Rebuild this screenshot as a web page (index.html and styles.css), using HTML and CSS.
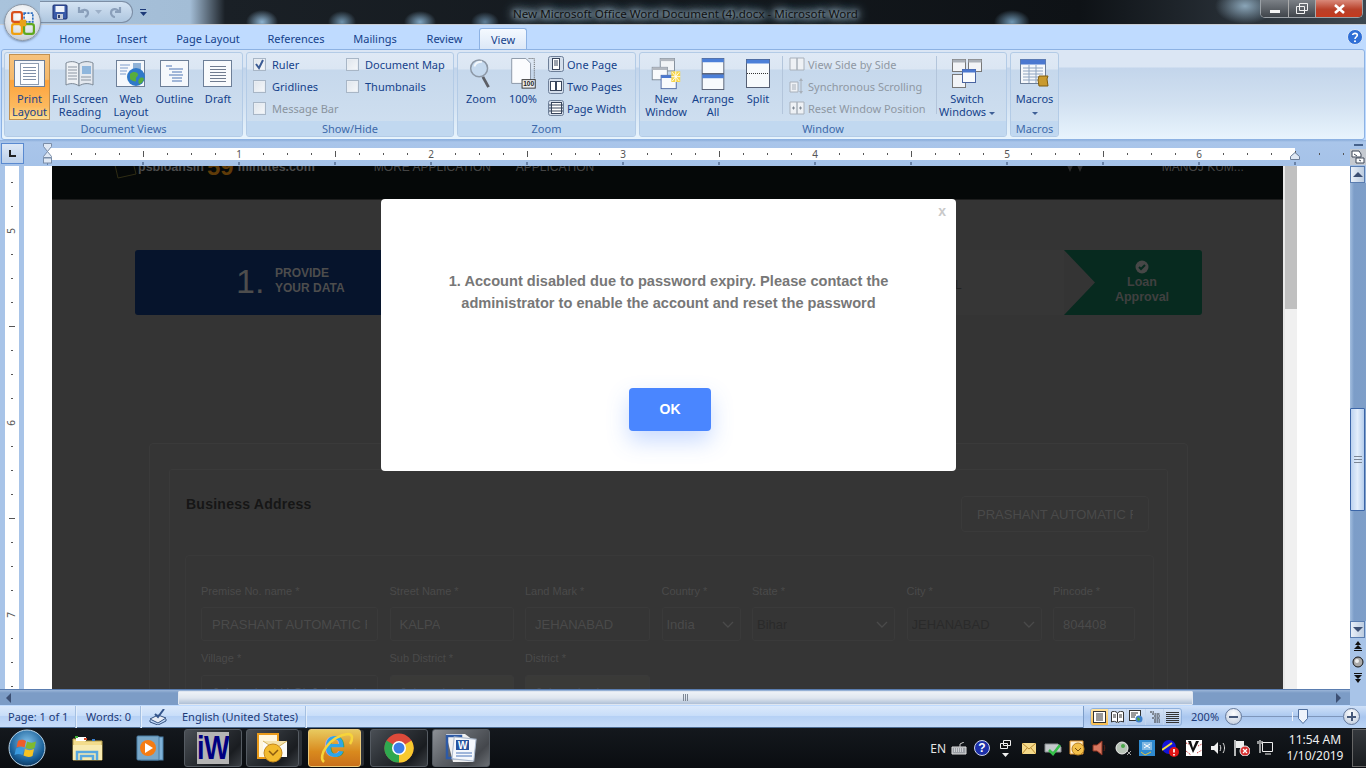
FILE: index.html
```html
<!DOCTYPE html>
<html lang="en">
<head>
<meta charset="utf-8">
<title>New Microsoft Office Word Document (4).docx - Microsoft Word</title>
<link rel="stylesheet" href="styles.css">
</head>
<body>
<div class="app">
  <header class="titlebar">
    <div class="qat">
      <svg class="qi" width="16" height="16" viewBox="0 0 16 16"><rect x="1" y="1" width="14" height="14" rx="1" fill="#3a5aa8" stroke="#1c2f70"/><rect x="3.500" y="2" width="9" height="6" fill="#eef2fa"/><rect x="5" y="10" width="6" height="5" fill="#c5cbd8"/><rect x="6" y="11" width="2" height="3" fill="#33406a"/></svg>
      <svg class="qi q-undo" width="14" height="14" viewBox="0 0 14 14"><path d="M2 2v5h5M3 7c2-3 8-3 8 1 0 2-1 3-3 4" fill="none" stroke="#8a9fba" stroke-width="2.200"/></svg>
      <svg class="qi q-drop" width="7" height="4" viewBox="0 0 7 4"><path d="M0 0h7L3.500 4z" fill="#9db0c8"/></svg>
      <svg class="qi q-redo" width="14" height="14" viewBox="0 0 14 14"><path d="M12 2v5H7M11 7C9 3 3 3 3 8c0 2 2 4 4 4" fill="none" stroke="#8a9fba" stroke-width="2.200"/></svg>
    </div>
    <svg class="q-more" width="7" height="7" viewBox="0 0 7 7"><path d="M0 0h6v1H0zM0 3h7L3.500 7z" fill="#1d3a78"/></svg>
    <div class="win-title">New Microsoft Office Word Document (4).docx - Microsoft Word</div>
    <div class="winbtns">
      <div class="wb wb-min"><span class="min-bar"></span></div>
      <div class="wb wb-max"><svg width="12" height="11" viewBox="0 0 12 11"><path d="M3.500.5h8v7h-8zM.5 3.500h8v7h-8z" fill="none" stroke="#f2f2f2"/></svg></div>
      <div class="wb wb-close"><svg width="11" height="10" viewBox="0 0 11 10"><path d="M1 1l9 8M10 1L1 9" stroke="#fff" stroke-width="2.600"/></svg></div>
    </div>
  </header>

  <div class="office-btn">
    <svg width="24" height="24" viewBox="0 0 22 22"><rect x="1" y="1" width="9" height="9" rx="2" fill="none" stroke="#d8501c" stroke-width="2"/><rect x="12" y="2" width="8" height="8" fill="none" stroke="#2f6fc0" stroke-width="1.500" stroke-dasharray="2 1"/><rect x="1" y="12" width="9" height="9" rx="2" fill="none" stroke="#f0a010" stroke-width="2"/><rect x="12" y="12" width="9" height="9" rx="2" fill="none" stroke="#5fa81e" stroke-width="2"/><rect x="8" y="8" width="6" height="6" fill="#e9a21a"/></svg>
  </div>

  <nav class="tabs">
    <span class="tab">Home</span><span class="tab">Insert</span><span class="tab">Page Layout</span><span class="tab">References</span><span class="tab">Mailings</span><span class="tab">Review</span><span class="tab tab-on">View</span>
    <svg class="help" width="16" height="16" viewBox="0 0 17 17"><circle cx="8.500" cy="8.500" r="8" fill="#2f6fd6" stroke="#dfeaf8"/><path d="M6 6.500C6 4 11 4 11 6.500c0 2-2.500 2-2.500 4" fill="none" stroke="#fff" stroke-width="1.700"/><circle cx="8.500" cy="13" r="1.100" fill="#fff"/></svg>
  </nav>

  <section class="ribbon">
    <div class="group g-views">
      <div class="group-body">
        <div class="big w41 active">
          <svg width="32" height="28" viewBox="0 0 32 28"><rect x=".5" y=".5" width="30" height="26" fill="#f4f7fb" stroke="#6d7f98"/><rect x="6.500" y="3.500" width="18" height="21" fill="#fff" stroke="#8e9cb0"/><path d="M9 7.500h13M9 10.500h13M9 13.500h13M9 16.500h13M9 19.500h13" stroke="#8090a8"/></svg>
          <span class="blabel">Print<br>Layout</span>
        </div>
        <div class="big w60">
          <svg width="30" height="28" viewBox="0 0 30 28"><path d="M1 3c4-2 9-2 13 1v22c-4-3-9-3-13-1z" fill="#eef1f5" stroke="#7b8794"/><path d="M14 4c4-3 10-3 14-1v22c-4-2-10-2-14 1z" fill="#e3e8ef" stroke="#7b8794"/><path d="M3 7h9M3 10h9M3 13h9M3 16h9M3 19h9" stroke="#8b95a2"/><rect x="17" y="6" width="9" height="8" fill="#8fb6dd"/><path d="M16 17h10M16 20h10" stroke="#8b95a2"/></svg>
          <span class="blabel">Full Screen<br>Reading</span>
        </div>
        <div class="big w42">
          <svg width="30" height="28" viewBox="0 0 30 28"><rect x=".5" y=".5" width="28" height="26" fill="#f5f8fc" stroke="#6d7f98"/><path d="M4 5h10M4 8h8M4 11h7M4 14h6" stroke="#7d9ccc"/><rect x="17" y="3" width="8" height="7" fill="#8fb2d8"/><circle cx="20" cy="17" r="9" fill="#2f79c9"/><path d="M14 14c3-3 7-2 8 0s-3 3-2 6-4 1-6-1zM24 18c2-1 4 0 4 1-1 3-3 5-5 5-1-2-1-4 1-6z" fill="#58ad3c"/></svg>
          <span class="blabel">Web<br>Layout</span>
        </div>
        <div class="big w45">
          <svg width="30" height="28" viewBox="0 0 30 28"><rect x=".5" y=".5" width="28" height="26" fill="#f5f8fc" stroke="#6d7f98"/><path d="M6 6h6M9 9h14M12 12h10M9 15h14M12 18h10M12 21h10" stroke="#4d74b4"/></svg>
          <span class="blabel">Outline</span>
        </div>
        <div class="big w42">
          <svg width="30" height="28" viewBox="0 0 30 28"><rect x=".5" y=".5" width="28" height="26" fill="#f8fafc" stroke="#6d7f98"/><path d="M7 6.500h16M7 9.500h16M7 12.500h16M7 15.500h16M7 18.500h16M7 21.500h16" stroke="#707c90"/></svg>
          <span class="blabel">Draft</span>
        </div>
      </div>
      <div class="group-label">Document Views</div>
    </div>

    <div class="group g-show">
      <div class="group-body checks">
        <div class="chk-col c1">
          <div class="chk"><span class="box"><svg width="11" height="11" viewBox="0 0 11 11"><path d="M2 5l3 4 4-8" fill="none" stroke="#3b5b94" stroke-width="2"/></svg></span>Ruler</div>
          <div class="chk"><span class="box"></span>Gridlines</div>
          <div class="chk off"><span class="box"></span>Message Bar</div>
        </div>
        <div class="chk-col">
          <div class="chk"><span class="box"></span>Document Map</div>
          <div class="chk"><span class="box"></span>Thumbnails</div>
        </div>
      </div>
      <div class="group-label">Show/Hide</div>
    </div>

    <div class="group g-zoom">
      <div class="group-body">
        <div class="big w46">
          <svg width="24" height="34" viewBox="0 0 24 34"><circle cx="10" cy="11" r="9" fill="#c5d9ee" stroke="#8d98a6" stroke-width="1.600"/><path d="M5 9c1-4 5-5 8-5" fill="none" stroke="#f2f7fc" stroke-width="2"/><path d="M14 20l6 11" stroke="#5c5f66" stroke-width="3"/></svg>
          <span class="blabel">Zoom</span>
        </div>
        <div class="big w38">
          <svg width="28" height="34" viewBox="0 0 28 34"><path d="M2 .5h15l5 5V27H2z" fill="#fbfcfe" stroke="#8894a4"/><path d="M20 .5h6v24" fill="none" stroke="#555" stroke-dasharray="1 1"/><rect x="13" y="23" width="14" height="9" fill="#eee" stroke="#333"/><text class="hundred" x="20" y="30" text-anchor="middle">100</text></svg>
          <span class="blabel">100%</span>
        </div>
        <div class="small-col">
          <div class="small"><svg width="16" height="16" viewBox="0 0 16 16"><rect x=".5" y=".5" width="15" height="15" rx="2" fill="#d4deeb" stroke="#6d7f98"/><rect x="4.500" y="2.500" width="7" height="11" fill="#fff" stroke="#39465c"/><path d="M6 5h4M6 7h4M6 9h4" stroke="#39465c"/></svg>One Page</div>
          <div class="small"><svg width="16" height="16" viewBox="0 0 16 16"><rect x=".5" y=".5" width="15" height="15" rx="2" fill="#d4deeb" stroke="#6d7f98"/><rect x="2.500" y="3.500" width="5" height="9" fill="#fff" stroke="#39465c"/><rect x="8.500" y="3.500" width="5" height="9" fill="#fff" stroke="#39465c"/></svg>Two Pages</div>
          <div class="small"><svg width="16" height="16" viewBox="0 0 16 16"><rect x=".5" y=".5" width="15" height="15" rx="2" fill="#d4deeb" stroke="#6d7f98"/><rect x="3.500" y="2.500" width="10" height="11" fill="#fff" stroke="#39465c"/><path d="M1 5h14M1 8h14M1 11h14" stroke="#39465c"/></svg>Page Width</div>
        </div>
      </div>
      <div class="group-label">Zoom</div>
    </div>

    <div class="group g-window">
      <div class="group-body">
        <div class="big w52">
          <svg width="32" height="36" viewBox="0 0 32 36"><rect x="9.500" y=".5" width="16" height="14" fill="#f2f4f7" stroke="#7a8694"/><rect x="9.500" y=".5" width="16" height="3" fill="#b3b8c0"/><rect x=".5" y="10.500" width="17" height="14" fill="#f9fafc" stroke="#7a8694"/><rect x=".5" y="10.500" width="17" height="3" fill="#b3b8c0"/><rect x="10.500" y="19.500" width="17" height="15" fill="#f9fafc" stroke="#4a64a0"/><rect x="10.500" y="19.500" width="17" height="3" fill="#4b78d0"/><rect x="22" y="15" width="10" height="12" fill="#f7d548"/><path d="M27 15v12M22 21h10M23 16l8 10M31 16l-8 10" stroke="#fff"/></svg>
          <span class="blabel">New<br>Window</span>
        </div>
        <div class="big w42">
          <svg width="26" height="34" viewBox="0 0 26 34"><rect x="1.500" y=".5" width="23" height="16" fill="#f7fafc" stroke="#555f73"/><rect x="1.500" y=".5" width="23" height="4" fill="#4b7fd8"/><rect x="1.500" y="17.500" width="23" height="16" fill="#f7fafc" stroke="#555f73"/><rect x="1.500" y="17.500" width="23" height="4" fill="#4b7fd8"/></svg>
          <span class="blabel">Arrange<br>All</span>
        </div>
        <div class="big w48">
          <svg width="26" height="30" viewBox="0 0 26 30"><rect x="1.500" y=".5" width="23" height="28" fill="#f7fafc" stroke="#555f73"/><rect x="1.500" y=".5" width="23" height="4" fill="#4b7fd8"/><path d="M2 14.500h22" stroke="#333" stroke-dasharray="1 1"/></svg>
          <span class="blabel">Split</span>
        </div>
        <div class="sep"></div>
        <div class="small-col dis">
          <div class="small"><svg width="16" height="16" viewBox="0 0 16 16"><path d="M1 2h7v12H1zM8 2h7v12H8z" fill="#eef1f5" stroke="#a8b0ba"/></svg>View Side by Side</div>
          <div class="small"><svg width="16" height="16" viewBox="0 0 16 16"><path d="M1 4h8v10H1z" fill="#eef1f5" stroke="#a8b0ba"/><path d="M3 7h4M3 9h4M3 11h4M12 2v12" stroke="#a8b0ba"/><path d="M12 0l2 3h-4zM12 16l2-3h-4z" fill="#a8b0ba"/></svg>Synchronous Scrolling</div>
          <div class="small"><svg width="16" height="16" viewBox="0 0 16 16"><path d="M1 2h7v12H1zM8 2h7v12H8z" fill="#eef1f5" stroke="#a8b0ba"/><path d="M3 8h3M4.500 6.500v3M10 8h3M11.500 6.500v3" stroke="#7f8894"/></svg>Reset Window Position</div>
        </div>
        <div class="sep"></div>
        <div class="big w60">
          <svg width="30" height="30" viewBox="0 0 30 30"><rect x=".5" y=".5" width="13" height="12" fill="#f2f4f7" stroke="#777"/><rect x=".5" y=".5" width="13" height="3" fill="#aab0b8"/><rect x="16.500" y=".5" width="13" height="12" fill="#f2f4f7" stroke="#777"/><rect x="16.500" y=".5" width="13" height="3" fill="#aab0b8"/><rect x=".5" y="15.500" width="13" height="13" fill="#f2f4f7" stroke="#777"/><rect x="10.500" y="10.500" width="13" height="13" fill="#f9fbfd" stroke="#4a64a0"/><rect x="10.500" y="10.500" width="13" height="3" fill="#4b78d0"/></svg>
          <span class="blabel">Switch<br>Windows <i class="drop"></i></span>
        </div>
      </div>
      <div class="group-label">Window</div>
    </div>

    <div class="group g-macros">
      <div class="group-body">
        <div class="big w47">
          <svg width="30" height="30" viewBox="0 0 30 30"><rect x=".5" y=".5" width="25" height="24" fill="#f6f8fb" stroke="#6d7f98"/><rect x=".5" y=".5" width="25" height="5" fill="#4b78d0"/><path d="M3 9h20M3 12h20M3 15h20M3 18h20M3 21h20M9 6v18M16 6v18" stroke="#8ea4c0"/><path d="M19 17h9l-1 3 1 7h-9l-1-6z" fill="#c99a2e" stroke="#7e5c10"/></svg>
          <span class="blabel">Macros<br><i class="drop"></i></span>
        </div>
      </div>
      <div class="group-label">Macros</div>
    </div>
  </section>

  <div class="ruler-row">
    <div class="tabstop"><svg width="9" height="9" viewBox="0 0 9 9"><path d="M1 1h2v5h5v2H1z" fill="#222"/></svg></div>
    <div class="hruler">
      <svg width="1303" height="24" viewBox="0 0 1303 24">
        <defs>
          <pattern id="tk" width="192" height="24" patternUnits="userSpaceOnUse">
            <path d="M24.500 11v2M48.500 11v2M72.500 11v2M120.500 11v2M144.500 11v2M168.500 11v2" stroke="#555"/>
            <path d="M96.500 9v6" stroke="#555"/>
          </pattern>
          <pattern id="tk2" width="96" height="24" patternUnits="userSpaceOnUse">
            <path d="M96 20v3M0 20v3" stroke="#6a83a8" stroke-width="2"/>
          </pattern>
        </defs>
        <rect y="6" width="1248" height="12" fill="#fff"/>
        <rect width="1303" height="24" fill="url(#tk2)"/>
        <rect width="1303" height="24" fill="url(#tk)"/>
        <text class="rnum" x="192" y="16" text-anchor="middle">1</text><text class="rnum" x="384" y="16" text-anchor="middle">2</text><text class="rnum" x="576" y="16" text-anchor="middle">3</text><text class="rnum" x="768" y="16" text-anchor="middle">4</text><text class="rnum" x="960" y="16" text-anchor="middle">5</text><text class="rnum" x="1152" y="16" text-anchor="middle">6</text>
      </svg>
      <svg class="indent-l" width="10" height="21" viewBox="0 0 10 21"><path d="M.5.5h8v3L4.500 8.500.5 3.500zM4.500 8.500l4 5v1h-8v-1z" fill="#dfe8f4" stroke="#7a8da8"/><rect x=".5" y="15" width="8" height="5" fill="#dfe8f4" stroke="#7a8da8"/></svg>
      <svg class="indent-r" width="10" height="8" viewBox="0 0 10 8"><path d="M5 .5l4.500 4v3h-9v-3z" fill="#dfe8f4" stroke="#6a7d98"/></svg>
    </div>
    <div class="view-toggle">
      <span class="dash"></span>
      <svg class="vt-icon" width="16" height="16" viewBox="0 0 16 16"><rect width="16" height="16" fill="#c4c9d0"/><path d="M2 2h7l2 3v3H2zM6 9h8v5H6z" fill="#fff" stroke="#3c4656"/><path d="M4 5l3 2M9 11l2 1" stroke="#3c4656"/></svg>
    </div>
  </div>

  <div class="doc-row">
    <div class="vruler">
      <svg width="14" height="523" viewBox="0 0 14 523">
        <defs>
          <pattern id="vt" width="14" height="192" patternUnits="userSpaceOnUse" patternTransform="translate(0 64)">
            <path d="M6 24.500h2M6 48.500h2M6 72.500h2M6 120.500h2M6 144.500h2M6 168.500h2" stroke="#555"/>
            <path d="M4 96.500h6" stroke="#555"/>
          </pattern>
        </defs>
        <rect width="14" height="523" fill="#fff"/>
        <rect width="14" height="523" fill="url(#vt)"/>
        <text class="rnum" transform="translate(10 65) rotate(-90)" text-anchor="middle">5</text>
        <text class="rnum" transform="translate(10 257) rotate(-90)" text-anchor="middle">6</text>
        <text class="rnum" transform="translate(10 449) rotate(-90)" text-anchor="middle">7</text>
      </svg>
    </div>
    <div class="page-margin"></div>

    <main class="webpage">
      <div class="site-head">
        <div class="site-row">
          <svg class="logo" width="24" height="18" viewBox="0 0 24 18"><path d="M2 4l18-3 3 12-18 4z" fill="none" stroke="#2f2c14"/></svg>
          <span class="brand">psbloansin</span><span class="brand-59">59</span><span class="brand">minutes.com</span>
          <span class="menu m1">MORE APPLICATION</span>
          <span class="menu m2">APPLICATION</span>
          <svg class="hands" width="20" height="12" viewBox="0 0 20 12"><path d="M0 0l5 11 5-11 5 11 5-11z" fill="#2b2b2b"/></svg>
          <span class="menu m3">MANOJ KUM...</span>
        </div>
      </div>
      <div class="site-body">
        <div class="stepper">
          <div class="step-one">
            <span class="step-num">1.</span>
            <span class="step-text">PROVIDE<br>YOUR DATA</span>
          </div>
          <div class="step-mid"><span class="step-l">L</span></div>
          <div class="step-end">
            <svg width="14" height="14" viewBox="0 0 14 14"><circle cx="7" cy="7" r="6.500" fill="#474747"/><path d="M4 7l2 2 4-4" fill="none" stroke="#072a1f" stroke-width="2"/></svg>
            <span class="step-end-text">Loan<br>Approval</span>
          </div>
        </div>

        <div class="card-outer">
          <div class="card-mid">
            <div class="biz-head">
              <h2 class="biz-title">Business Address</h2>
              <div class="field-in biz-input"><span class="clip">PRASHANT AUTOMATIC R</span></div>
            </div>
            <div class="card-inner">
              <div class="form-grid">
                <label class="lab">Premise No. name *</label><label class="lab">Street Name *</label><label class="lab">Land Mark *</label><label class="lab">Country *</label><label class="lab">State *</label><label class="lab">City *</label><label class="lab">Pincode *</label>
                <div class="field-in f1"><span class="clip">PRASHANT AUTOMATIC R</span></div>
                <div class="field-in"><span class="clip">KALPA</span></div>
                <div class="field-in"><span class="clip">JEHANABAD</span></div>
                <div class="field-in sel"><span class="clip">India</span><svg width="12" height="7" viewBox="0 0 12 7"><path d="M1 1l5 5 5-5" fill="none" stroke="#4a4a4a" stroke-width="1.400"/></svg></div>
                <div class="field-in sel sel-dark"><span class="clip">Bihar</span><svg width="12" height="7" viewBox="0 0 12 7"><path d="M1 1l5 5 5-5" fill="none" stroke="#4a4a4a" stroke-width="1.400"/></svg></div>
                <div class="field-in sel sel-dark"><span class="clip">JEHANABAD</span><svg width="12" height="7" viewBox="0 0 12 7"><path d="M1 1l5 5 5-5" fill="none" stroke="#4a4a4a" stroke-width="1.400"/></svg></div>
                <div class="field-in"><span class="clip">804408</span></div>
                <label class="lab row2">Village *</label><label class="lab row2">Sub District *</label><label class="lab row2">District *</label><span class="row2 fill4"></span>
                <div class="field-in f1"><span class="clip">Jehanabad H.O) Jehanabad</span></div>
                <div class="field-in ro"><span class="clip">Jehanabad</span></div>
                <div class="field-in ro"><span class="clip">Jehanabad</span></div>
              </div>
            </div>
          </div>
        </div>
      </div>

      <div class="modal">
        <span class="modal-x">x</span>
        <p class="modal-msg">1. Account disabled due to password expiry. Please contact the<br>administrator to enable the account and reset the password</p>
        <button class="modal-ok" type="button">OK</button>
      </div>
    </main>

    <div class="browser-scroll"></div>
    <div class="page-right"></div>

    <div class="vscroll">
      <div class="sb-btn"><i class="tri-up"></i></div>
      <div class="sb-track"><div class="sb-thumb"><span class="grip"></span></div></div>
      <div class="sb-btn"><i class="tri-down"></i></div>
      <div class="sb-nav">
        <svg width="10" height="10" viewBox="0 0 10 10"><path d="M5 0l3 4H2zM5 4l4 4H1zM1 9h8v1H1z" fill="#111"/></svg>
        <svg width="12" height="12" viewBox="0 0 12 12"><circle cx="6" cy="6" r="5" fill="#aaa" stroke="#111"/><circle cx="5" cy="5" r="2" fill="#eee"/></svg>
        <svg width="10" height="10" viewBox="0 0 10 10"><path d="M1 0h8v1H1zM1 2h8L5 6zM2 6h6l-3 4z" fill="#111"/></svg>
      </div>
    </div>
  </div>

  <div class="hscroll-row">
    <div class="hscroll">
      <i class="tri-left"></i>
      <div class="h-thumb"><svg width="6" height="7" viewBox="0 0 6 7"><path d="M.5 0v7M2.500 0v7M4.500 0v7" stroke="#7d8794"/></svg></div>
      <i class="tri-right"></i>
    </div>
    <div class="h-corner"></div>
  </div>

  <footer class="statusbar">
    <span class="st st-page">Page: 1 of 1</span>
    <span class="st st-words">Words: 0</span>
    <span class="st st-proof"><svg width="18" height="16" viewBox="0 0 18 16"><path d="M1 10l8-4 8 3-8 5z" fill="#e8ecf4" stroke="#33507f"/><path d="M1 11v2l8 3 8-4v-2" fill="none" stroke="#33507f"/><path d="M6 5l3 3 6-8" fill="none" stroke="#34558c" stroke-width="2"/></svg></span>
    <span class="st st-lang">English (United States)</span>
    <div class="st-right">
      <div class="viewbtns">
        <span class="vb vb-on"><svg width="13" height="12" viewBox="0 0 13 12"><rect x=".5" y=".5" width="12" height="11" fill="#fff" stroke="#333"/><path d="M3 3h7M3 5h7M3 7h7M3 9h7" stroke="#333"/></svg></span>
        <span class="vb"><svg width="13" height="12" viewBox="0 0 13 12"><path d="M.5 1c2-1 4-1 6 1 2-2 4-2 6-1v10c-2-1-4-1-6 1-2-2-4-2-6-1z" fill="#fff" stroke="#333"/><path d="M6.500 2v9M2 4h3M2 6h3M8 4h3M8 6h3" stroke="#333"/></svg></span>
        <span class="vb"><svg width="14" height="13" viewBox="0 0 14 13"><rect x=".5" y=".5" width="11" height="10" fill="#fff" stroke="#333"/><path d="M2 3h7M2 5h5M2 7h4" stroke="#333"/><circle cx="10" cy="9" r="3.500" fill="#3d7fc9"/><path d="M8 8c1-1 3 0 3 2l-2 1z" fill="#4fa63a"/></svg></span>
        <span class="vb"><svg width="13" height="12" viewBox="0 0 13 12"><path d="M2 1h4M4 3h8M6 5h6M4 7h8M6 9h6M6 11h6" stroke="#333" stroke-dasharray="2 .5"/></svg></span>
        <span class="vb"><svg width="13" height="12" viewBox="0 0 13 12"><path d="M0 1.500h13M0 3.500h13M0 5.500h13M0 7.500h13M0 9.500h13M0 11.500h13" stroke="#333"/></svg></span>
      </div>
      <span class="zoom-pct">200%</span>
      <span class="zbtn"><i class="z-minus"></i></span>
      <div class="zslider">
        <span class="z-mid"></span>
        <svg class="z-thumb" width="10" height="15" viewBox="0 0 10 15"><path d="M.5.5h9v9L5 14.500.5 9.500z" fill="#eef3fb" stroke="#4f6f9f"/></svg>
      </div>
      <span class="zbtn"><i class="z-minus"></i><i class="z-plus"></i></span>
    </div>
  </footer>

  <div class="taskbar">
    <div class="start">
      <svg width="38" height="38" viewBox="0 0 38 38"><defs><radialGradient id="orb" cx=".5" cy=".35" r=".7"><stop offset="0" stop-color="#7fc0ea"/><stop offset=".7" stop-color="#175d96"/><stop offset="1" stop-color="#0c2f52"/></radialGradient></defs><circle cx="19" cy="19" r="18" fill="url(#orb)" stroke="#b8d4e8"/><path d="M10 12c3-2 6-1 8 0l-1.500 6.500c-2-1-5-1.500-8 0z" fill="#ef5d2a"/><path d="M19 12.500c3 1.500 6 1.500 9 0L26.500 19c-3 1.500-6 1-9 0z" fill="#7fba2f"/><path d="M8 19.500c3-1.500 6-1 8 0L14.500 26c-2-1-5-1.500-8 0z" fill="#3a9be0"/><path d="M17 20c3 1.500 6 1.500 9 0L24.500 27c-3 1.500-6 1-9-.5z" fill="#f7c322"/></svg>
    </div>
    <div class="pin p-folder">
      <svg width="32" height="28" viewBox="0 0 32 28"><path d="M1 5h10l2 2h17v19H1z" fill="#f3dc8c" stroke="#b9a14e"/><rect x="4" y="3" width="10" height="4" fill="#fff"/><rect x="3" y="2" width="3" height="2" fill="#3ab03a"/><rect x="12" y="4" width="3" height="2" fill="#d84a2a"/><rect x="20" y="5" width="3" height="2" fill="#3a80d0"/><path d="M1 11h29v15H1z" fill="#f8eab0"/><path d="M5 26v-8h20v8M9 26v-4h12v4" fill="none" stroke="#58a8e0" stroke-width="2.500"/></svg>
    </div>
    <div class="pin p-media">
      <svg width="28" height="28" viewBox="0 0 28 28"><rect x="5" y="3" width="22" height="23" fill="#7fb2d8" stroke="#4b7ea6"/><rect x="1" y="2" width="22" height="24" rx="1" fill="#7aa8c9" stroke="#4b7ea6"/><circle cx="12" cy="14" r="8" fill="#f57c14"/><path d="M9 9l8 5-8 5z" fill="#fff"/></svg>
    </div>
    <div class="tb-btn t-iw"><span class="iw-tile"><b class="iw-text">iW</b></span></div>
    <div class="tb-btn t-outlook stack">
      <svg width="32" height="32" viewBox="0 0 32 32"><path d="M1 2h20v24H1z" fill="#fff6dc" stroke="#e99a1a" stroke-width="2"/><rect x="6" y="9" width="24" height="16" fill="#fbfbf8"/><path d="M6 9l12 8 12-8" fill="#f4e3ae" stroke="#d4b25a"/><circle cx="16" cy="21" r="9" fill="#f3bb2e" stroke="#c5881a"/><path d="M12 19l4 4 5-5" fill="none" stroke="#8a5a10" stroke-width="1.500"/></svg>
    </div>
    <div class="tb-btn t-ie stack">
      <span class="ie-e">e</span>
      <svg class="ie-ring" width="36" height="34" viewBox="0 0 36 34"><path d="M6 30C-1 24 12 4 30 2c5 0 5 5 2 10" fill="none" stroke="#f7d43a" stroke-width="2.500"/></svg>
    </div>
    <div class="tb-btn t-chrome">
      <svg width="30" height="30" viewBox="0 0 30 30"><circle cx="15" cy="15" r="14.500" fill="#dd4a3a"/><path d="M15 15L2.500 7.500A14.500 14.500 0 0 0 15 29.500z" fill="#2fa84f"/><path d="M15 15l12.500-7.500A14.500 14.500 0 0 1 15 29.500z" fill="#f8c92e"/><circle cx="15" cy="15" r="7" fill="#fff"/><circle cx="15" cy="15" r="5.500" fill="#3d7ee6"/></svg>
    </div>
    <div class="tb-btn t-word">
      <svg width="32" height="32" viewBox="0 0 32 32"><path d="M1 2h19l8 6v22H8z" fill="#fff" opacity=".9"/><path d="M2 4h14v22H2z" fill="none" stroke="#2d5aa6" stroke-width="2.500"/><rect x="8" y="6" width="22" height="22" fill="#f4f7fc" stroke="#aab8cc" transform="rotate(6 19 17)"/><rect x="11" y="8" width="13" height="10" fill="#25529e"/><text class="w-letter" x="13" y="17">W</text><path d="M11 21h16M11 24h16" stroke="#4a74b8"/></svg>
    </div>
    <div class="tb-space"></div>
    <span class="tray-en">EN</span>
    <div class="tray">
      <svg width="16" height="13" viewBox="0 0 16 13"><path d="M1 5h14v7H1z" fill="#9a9ea4" stroke="#e0e0e0"/><path d="M3 7h10M3 9h10" stroke="#fff" stroke-dasharray="1 1"/><path d="M9 5V2l4-2" fill="none" stroke="#ccc"/></svg>
      <svg width="16" height="16" viewBox="0 0 16 16"><circle cx="8" cy="8" r="7.500" fill="#1c2fa8" stroke="#cfd4e8"/><text class="q-mark" x="8" y="12" text-anchor="middle">?</text></svg>
      <svg width="11" height="17" viewBox="0 0 11 17"><path d="M3.500.5h7v5h-7zM.5 3.500h7v5h-7z" fill="#111" stroke="#eee"/><path d="M2 13h7l-3.500 4z" fill="#eee"/></svg>
      <svg width="14" height="11" viewBox="0 0 14 11"><rect width="14" height="11" fill="#f4d98a"/><path d="M0 0l7 6 7-6M0 11l5-6M14 11L9 5" fill="none" stroke="#b98a30"/></svg>
      <svg width="18" height="15" viewBox="0 0 18 15"><path d="M1 3h13l3 3v5H1z" fill="#c4c8cc" stroke="#8a8e92"/><path d="M5 9l4 4 7-9" fill="none" stroke="#35c04a" stroke-width="2.500"/></svg>
      <svg width="16" height="16" viewBox="0 0 16 16"><path d="M1 1h13v13H1z" fill="#fff0d0" stroke="#e0912a"/><circle cx="9" cy="9" r="6" fill="#f3c04a" stroke="#b88020"/><path d="M6 8l3 3 3-3" fill="none" stroke="#7a5010"/></svg>
      <svg width="16" height="16" viewBox="0 0 16 16"><path d="M1 5h4l5-4v14l-5-4H1z" fill="#d87860" stroke="#8a3020"/><path d="M12 5c1 2 1 4 0 6" fill="none" stroke="#5a2015"/></svg>
      <svg width="17" height="15" viewBox="0 0 17 15"><circle cx="7" cy="7" r="6" fill="#b8c4b8" stroke="#eee"/><circle cx="8" cy="5" r="2" fill="#4aa84a"/><path d="M12 10l4 4M16 10l-4 4" stroke="#aaa"/></svg>
      <svg width="16" height="16" viewBox="0 0 16 16"><rect width="16" height="16" fill="#2f8ad0"/><rect x="3" y="2" width="10" height="8" fill="#fff" opacity=".4"/><path d="M5 4l6 4M11 4L5 8" stroke="#fff"/><path d="M2 12l4 3 6-3" stroke="#e8c23a" fill="none"/></svg>
      <svg width="17" height="17" viewBox="0 0 17 17"><circle cx="7" cy="7" r="7" fill="#1414d8"/><path d="M0 10l10-7" stroke="#f0e040" stroke-width="2"/><circle cx="12" cy="12" r="5" fill="#e01414"/><path d="M12 9v3.500M12 14v1.500" stroke="#fff" stroke-width="1.700"/></svg>
      <svg width="16" height="16" viewBox="0 0 16 16"><rect width="16" height="16" fill="#fff"/><path d="M2 1l5 12L13 1h-3L7 8 5 1z" fill="#111"/><path d="M0 11l5 4M11 13l5-3M0 3l3 1M12 6l4-2" stroke="#c01c1c" stroke-dasharray="1 1"/></svg>
      <svg width="15" height="14" viewBox="0 0 15 14"><path d="M0 5h3l4-4v12L3 9H0z" fill="#eee"/><path d="M9 4c1 2 1 4 0 6M12 2c2 3 2 7 0 10" fill="none" stroke="#ddd"/></svg>
      <svg width="16" height="16" viewBox="0 0 16 16"><path d="M1 0v16" stroke="#eee" stroke-width="1.500"/><path d="M2 1h8v7H2z" fill="#eee"/><circle cx="11" cy="11" r="5" fill="#d83030" stroke="#eee"/><path d="M9 9l4 4M13 9l-4 4" stroke="#fff" stroke-width="1.300"/></svg>
      <svg width="16" height="16" viewBox="0 0 16 16"><path d="M5.500 2.500h10v9h-10z" fill="none" stroke="#eee"/><path d="M3 0v5M1 1v3M5 1v3M3 5v8M8 14h6" stroke="#eee" stroke-width="1.200"/></svg>
    </div>
    <div class="clock"><span>11:54 AM</span><span>1/10/2019</span></div>
    <div class="show-desk"></div>
  </div>
</div>
</body>
</html>
```

FILE: styles.css
```css
* { box-sizing: border-box; }
html, body { margin: 0; height: 100%; overflow: hidden; }
body { font-family: "Noto Sans", "Open Sans", sans-serif; font-size: 11px; color: #15428b; background: #bfdbff; }
.app { position: relative; width: 1366px; height: 768px; display: flex; flex-direction: column; overflow: hidden; }

/* title bar */
.titlebar {
  height: 25px; flex: none; display: flex; align-items: center; position: relative;
  border-bottom: 1px solid #c8ccd2;
  background:
    radial-gradient(ellipse 16px 12px at 262px 22px, #8db4d2, transparent),
    radial-gradient(ellipse 14px 11px at 342px 22px, #6f93ad, transparent),
    radial-gradient(ellipse 16px 11px at 420px 22px, #7fa5c2, transparent),
    radial-gradient(ellipse 14px 10px at 485px 22px, #5f7f98, transparent),
    radial-gradient(ellipse 18px 12px at 1012px 22px, #6f97b4, transparent),
    radial-gradient(ellipse 30px 18px at 1245px 6px, #8aa5b8, transparent),
    linear-gradient(90deg, #a9c3dc 0, #a3bdd6 190px, #1a2026 225px, #0e1216 1080px, #252c33 1220px, #3c4750 1366px);
}
.qat {
  margin-left: 40px; width: 93px; height: 22px; border: 1px solid #7c8ea5; border-left: 0; border-radius: 0 11px 11px 0;
  background: linear-gradient(#d4e3f3, #aec6df); display: flex; align-items: center; padding-left: 12px;
}
.qi { flex: none; display: block; }
.q-undo { margin-left: 9px; }
.q-drop { margin-left: 4px; }
.q-redo { margin-left: 6px; }
.q-more { margin-left: 7px; }
.win-title { position: absolute; left: 513px; top: 6px; font-size: 11.600px; line-height: 16px; color: #111; white-space: nowrap; text-shadow: 0 0 5px #a8c2d4, 0 0 8px #a8c2d4, 0 0 12px #93b0c4, 0 0 14px #93b0c4; }
.winbtns { margin-left: auto; margin-right: 3px; align-self: flex-start; width: 103px; height: 18px; display: flex; border: 1px solid #9aa0a6; border-top: 0; border-radius: 0 0 5px 5px; overflow: hidden; background: #333; }
.wb { display: flex; align-items: center; justify-content: center; height: 100%; }
.wb-min { width: 28px; background: linear-gradient(#7b8086, #40454b); border-right: 1px solid #aaa; }
.wb-max { width: 27px; background: linear-gradient(#7b8086, #40454b); border-right: 1px solid #aaa; }
.wb-close { flex: 1; background: linear-gradient(#d9897a, #b9412a 55%, #c43a1e); }
.min-bar { width: 10px; height: 3px; margin-top: 5px; background: #f4f4f4; }

.office-btn {
  position: absolute; left: 4px; top: 4px; width: 37px; height: 37px; border-radius: 50%; z-index: 5;
  display: flex; align-items: center; justify-content: center; border: 1px solid #8c97a4;
  background: radial-gradient(circle at 50% 30%, #fff 0, #dfe4ea 55%, #b5bcc6 100%);
  box-shadow: 0 1px 2px rgba(60,80,110,.5);
}

/* tabs */
.tabs { height: 24px; flex: none; display: grid; background: #bfdbff; padding-left: 50px; position: relative; grid-template-columns: 50px 64px 88px 88px 70px 69px 48px; }
.tab { display: flex; align-items: center; justify-content: center; padding-top: 2px; font-size: 11px; }
.tab-on { margin-top: 3px; padding-top: 0; border: 1px solid #8db2e3; border-bottom: 0; border-radius: 3px 3px 0 0; background: linear-gradient(#f4f9ff, #dce8f7); position: relative; z-index: 1; }
.help { position: absolute; right: 3px; top: 4px; }

/* ribbon */
.ribbon {
  height: 91px; flex: none; margin: 0 1px; padding: 2px 0 0 2px; display: flex; gap: 3px;
  border: 1px solid #8db2e3; border-radius: 3px;
  background: linear-gradient(#dbe6f4 0, #dbe6f4 17px, #c3d5eb 18px, #d2e1f1 60%, #e8f4fd 100%);
}
.group { display: flex; flex-direction: column; height: 85px; border: 1px solid #b3cbe6; border-radius: 3px; background: linear-gradient(#dfe9f5 0, #dbe6f3 16px, #c6d8ec 17px, #d0e0f0 100%); overflow: hidden; }
.g-views { width: 239px; }
.g-show { width: 208px; }
.g-zoom { width: 179px; }
.g-window { width: 368px; }
.g-macros { width: 49px; }
.group-body { height: 68px; display: flex; }
.g-views .group-body { padding-left: 4px; padding-top: 1px; }
.group-label { height: 15px; flex: none; text-align: center; line-height: 15px; color: #3e6aaa; background: #c1d8f0; }
.big { height: 66px; display: flex; flex-direction: column; align-items: center; justify-content: flex-start; padding-top: 5px; flex: none; }
.g-views .big { padding-top: 4px; }
.g-views .big.active { padding-top: 3px; }
.big svg { height: 32px; flex: none; }
.blabel { display: block; text-align: center; line-height: 13px; white-space: nowrap; margin-top: 2px; }
.w38 { width: 38px; } .w41 { width: 41px; } .w42 { width: 42px; } .w45 { width: 45px; } .w46 { width: 46px; } .w47 { width: 47px; } .w48 { width: 48px; } .w52 { width: 52px; } .w60 { width: 60px; }
.active { border: 1px solid #c2904f; background: linear-gradient(#f6c27d 0, #f5b96b 38%, #fda33c 40%, #fcb95e 80%, #fedc8e 100%); }
.drop { display: inline-block; width: 0; height: 0; border: 3px solid transparent; border-top: 3px solid #3e5f96; border-bottom: 0; vertical-align: middle; }

.checks { padding-left: 6px; }
.chk-col { display: flex; flex-direction: column; }
.c1 { width: 93px; }
.chk { height: 22px; display: flex; align-items: center; white-space: nowrap; }
.chk.off { color: #8a949e; }
.box { width: 13px; height: 13px; flex: none; margin-right: 6px; border: 1px solid #a8b6c6; background: linear-gradient(135deg, #dfe5ec, #f6f8fa); display: flex; align-items: center; justify-content: center; box-shadow: inset 0 0 0 1px #e8edf3; }
.small-col { display: flex; flex-direction: column; }
.small { height: 22px; display: flex; align-items: center; gap: 3px; white-space: nowrap; }
.g-zoom .small-col { margin-left: 6px; }
.dis { color: #8f98a3; margin-left: 6px; width: 147px; }
.sep { width: 1px; height: 58px; margin-top: 3px; background: #b3c5db; flex: none; }
.sep:first-of-type { margin-left: 1px; }

/* ruler */
.ruler-row { height: 26px; flex: none; display: flex; background: linear-gradient(#8fb0dc 0, #a9c5ea 2px, #a5c2e8 100%); padding-top: 2px; position: relative; }
.tabstop { width: 23px; height: 21px; margin-left: 1px; margin-top: 1px; border: 1px solid #5a8ad0; background: linear-gradient(#dde8f6, #bcd0ea); display: flex; align-items: center; justify-content: center; flex: none; }
.hruler { margin-left: 23px; width: 1303px; height: 24px; position: relative; flex: none; }
.hruler svg { display: block; }
.hundred { font: 700 7px "Liberation Sans", Arial, sans-serif; fill: #222; }
.rnum { font-family: "Noto Sans", sans-serif; font-size: 10px; fill: #555; }
.indent-l { position: absolute; left: -4px; top: 1px; }
.indent-r { position: absolute; left: 1243px; top: 10px; }
.view-toggle { width: 16px; flex: none; display: flex; flex-direction: column; align-items: center; }
.dash { width: 9px; height: 2px; margin-top: 2px; background: #46628c; flex: none; }
.vt-icon { margin-top: 3px; display: block; }

/* document area */
.doc-row { height: 523px; flex: none; display: flex; background: #a8c4e8; }
.vruler { width: 24px; flex: none; padding-left: 5px; background: #a8c4e8; }
.vruler svg { display: block; }
.page-margin { width: 28px; flex: none; background: #fff; }
.webpage { width: 1231px; flex: none; position: relative; overflow: hidden; background: #343434; color: #4b4b4b; font-family: "Liberation Sans", Arial, sans-serif; }
.browser-scroll { width: 14px; flex: none; border-left: 2px solid #e8e8e8; background: linear-gradient(#c0c0c0 0, #c0c0c0 143px, #f0f0f0 143px); }
.page-right { width: 53px; flex: none; background: #fff; }

.site-head { height: 34px; background: #050808; border-bottom: 1px solid #1d1d1d; overflow: hidden; }
.site-row { display: flex; align-items: center; height: 16px; margin-top: -7px; padding-left: 61px; font-size: 11px; color: #4c4c4c; white-space: nowrap; }
.logo { flex: none; margin-top: 6px; }
.brand { font-size: 12.500px; font-weight: 700; margin-left: 1px; }
.brand-59 { font-size: 24px; font-weight: 700; color: #5f3b08; margin: 0 3px; line-height: 16px; }
.menu { font-size: 12px; color: #444; }
.m1 { margin-left: 59px; width: 142px; }
.m2 { width: 549px; }
.hands { flex: none; }
.m3 { margin-left: 77px; }

.site-body { padding-top: 50px; }
.stepper { margin-left: 83px; width: 1067px; height: 65px; display: flex; }
.step-one { width: 400px; display: flex; align-items: center; padding: 0 0 3px 101px; background: #06142c; border-radius: 3px 0 0 3px; }
.step-num { font-size: 34px; color: #4d4d4d; width: 39px; }
.step-text { font-size: 12px; font-weight: 700; line-height: 15px; color: #4d4d4d; }
.step-mid { width: 529px; background: #363636; position: relative; padding-left: 420px; font-size: 12px; line-height: 70px; color: #222; }
.step-l { display: inline-block; }
.step-end {
  flex: 1; background: #072a1f; border-radius: 0 3px 3px 0; clip-path: polygon(0 0, 100% 0, 100% 100%, 0 100%, 31px 50%);
  display: flex; flex-direction: column; align-items: center; padding: 10px 0 0 18px; color: #3f3f3f;
}
.step-end-text { text-align: center; font-size: 12.500px; font-weight: 700; line-height: 15px; margin-top: 1px; color: #404040; }
.card-outer { margin: 128px 0 0 97px; width: 1039px; height: 400px; padding: 25px 19px 0; border: 1px solid #3a3a3a; border-radius: 4px; background: #353535; }
.card-mid { height: 400px; padding: 0 16px 0 15px; border: 1px solid #3a3a3a; background: #353535; border-radius: 3px; }
.biz-head { display: flex; justify-content: space-between; align-items: flex-start; padding: 26px 2px 0 1px; height: 64px; }
.biz-title { margin: 0; font-size: 14px; line-height: 16px; font-weight: 700; color: #161616; letter-spacing: .25px; }
.card-inner { margin: 21px -15px 0 0; height: 300px; width: 969px; padding: 28px 0 0 15px; border: 1px solid #393939; border-radius: 4px; }
.form-grid { display: grid; grid-template-columns: 177px 124px 125px 79px 143px 135px 82px; column-gap: 11.500px; grid-template-rows: 23px 34px 34px 34px; }
.lab { font-size: 11px; line-height: 14px; color: #4a4a4a; white-space: nowrap; }
.row2 { align-self: end; padding-bottom: 10px; line-height: 14px; }
.fill4 { grid-column: span 4; }
.field-in { display: flex; align-items: center; justify-content: space-between; height: 34px; padding: 0 9px; border: 1px solid #3a3a3a; border-radius: 3px; background: #353535; font-size: 13px; color: #4a4a4a; overflow: hidden; }
.field-in.f1 { padding: 0 10px; }
.field-in.biz-input { width: 188px; height: 36px; padding: 0 15px; border-radius: 4px; }
.form-grid .sel { padding-left: 4px; padding-right: 6px; }
.form-grid .sel-dark { color: #2a2a2a; }
.field-in svg { flex: none; }
.clip { display: block; overflow: hidden; white-space: nowrap; }
.ro { background: #3a3a38; }

/* modal */
.modal { position: absolute; left: 329px; top: 33px; width: 575px; height: 272px; padding-top: 71px; background: #fff; border-radius: 4px; text-align: center; }
.modal-x { position: absolute; right: 10px; top: 4px; font-size: 14px; font-weight: 700; color: #c9c9c9; }
.modal-msg { margin: 0; font-size: 14.600px; font-weight: 700; line-height: 22px; color: #777; }
.modal-ok { position: absolute; left: 248px; top: 189px; width: 82px; height: 43px; padding: 0 0 2px; border: 0; border-radius: 4px; background: #4a86ff; color: #fff; font: 700 14px "Liberation Sans", Arial, sans-serif; box-shadow: 0 10px 22px rgba(74,134,255,.3); }

/* scrollbars */
.vscroll { width: 16px; flex: none; display: flex; flex-direction: column; background: #a8c4e8; }
.sb-btn { height: 17px; flex: none; border: 1px solid #5a7db0; background: linear-gradient(90deg, #e9f0f9, #bccce0); display: flex; align-items: center; justify-content: center; margin-right: 1px; }
.tri-up { width: 0; height: 0; border: 5px solid transparent; border-bottom: 5px solid #3c4f73; border-top: 0; }
.tri-down { width: 0; height: 0; border: 5px solid transparent; border-top: 5px solid #3c4f73; border-bottom: 0; }
.sb-track { flex: 1; background: linear-gradient(90deg, #a3bedf, #7c9dc8 25%, #7e9ec8); padding-top: 225px; }
.sb-thumb { height: 103px; margin-right: 1px; border: 1px solid #3c66a8; border-radius: 1px; background: linear-gradient(90deg, #bcd3f0, #e3eefb 50%, #b5cdec); display: flex; align-items: center; justify-content: center; }
.grip { width: 8px; height: 7px; border-top: 1px solid #7c8796; border-bottom: 1px solid #7c8796; background: linear-gradient(#7c8796, #7c8796) center / 100% 1px no-repeat; }
.sb-nav { height: 51px; flex: none; display: flex; flex-direction: column; align-items: center; justify-content: space-around; padding: 0 0 3px; }

.hscroll-row { height: 17px; flex: none; display: flex; }
.hscroll { width: 1350px; height: 16px; flex: none; display: flex; align-items: center; border-top: 1px solid #5a7db0; background: linear-gradient(#9ab5d8, #7c9cc6 20%, #7c9cc6); padding-left: 6px; }
.h-corner { flex: 1; background: #a8c4e8; }
.tri-left { width: 0; height: 0; border: 5px solid transparent; border-right: 5px solid #3c4f73; border-left: 0; }
.tri-right { width: 0; height: 0; border: 5px solid transparent; border-left: 5px solid #3c4f73; border-right: 0; margin-left: 143px; }
.h-thumb { width: 1015px; height: 14px; margin-left: 167px; border: 1px solid #dfe6f0; border-radius: 1px; background: linear-gradient(#eef2f7, #dfe6ef 50%, #afc0d6); display: flex; align-items: center; justify-content: center; }

/* status bar */
.statusbar { height: 22px; flex: none; display: flex; align-items: center; position: relative; background: linear-gradient(#dbe9fb 0, #c9def9 45%, #b6d1f5 50%, #c6dcf9 100%); border-bottom: 1px solid #4d6d94; font-size: 11px; color: #1d3a78; white-space: nowrap; }
.st { height: 22px; display: flex; align-items: center; border-right: 1px solid #a5c0e2; box-shadow: 1px 0 0 #e3eefb; flex: none; }
.st-page { width: 76px; padding-left: 8px; }
.st-words { width: 65px; padding-left: 10px; }
.st-proof { width: 41px; padding-left: 8px; border-right: 0; box-shadow: none; }
.st-lang { width: 124px; }
.st-right { margin-left: auto; width: 283px; height: 22px; display: flex; align-items: center; padding-left: 6px; border-left: 1px solid #7d9dc8; background: linear-gradient(#cfe1f8, #a9c6ef 50%, #bcd5f5); }
.viewbtns { width: 92px; height: 18px; display: flex; border: 1px solid #8fb0dc; border-radius: 3px; background: linear-gradient(#d5e3f6, #b3cbec); overflow: hidden; }
.vb { flex: 1; display: flex; align-items: center; justify-content: center; border-right: 1px solid #c3d6ee; }
.vb:last-child { border-right: 0; }
.vb-on { background: linear-gradient(#fde2a0, #f7bd4f); }
.zoom-pct { margin-left: 9px; width: 34px; color: #1d3a78; }
.zbtn { width: 17px; height: 17px; border-radius: 50%; flex: none; border: 1px solid #64789a; background: radial-gradient(circle at 50% 30%, #fff, #b9c6da); position: relative; }
.z-minus { position: absolute; left: 3px; top: 6.500px; width: 9px; height: 2px; background: #47597a; }
.z-plus { position: absolute; left: 6.500px; top: 3px; width: 2px; height: 9px; background: #47597a; }
.zslider { width: 101px; height: 17px; flex: none; position: relative; background: linear-gradient(#7e96bb, #7e96bb) center / 100% 1px no-repeat; }
.z-mid { position: absolute; left: 50px; top: 4px; width: 1px; height: 9px; background: #eef3fb; }
.z-thumb { position: absolute; left: 56px; top: 1px; }

/* taskbar */
.taskbar { height: 40px; flex: none; display: flex; align-items: center; background: linear-gradient(#14181d, #0a0d11); color: #e8e8e8; }
.start { width: 58px; flex: none; padding-left: 8px; display: flex; align-items: center; }
.pin { display: flex; align-items: center; justify-content: center; flex: none; }
.p-folder { width: 60px; }
.p-media { width: 66px; padding-right: 2px; }
.tb-btn { height: 38px; flex: none; display: flex; align-items: center; justify-content: center; position: relative; border: 1px solid #555b62; border-radius: 3px; background: linear-gradient(135deg, #4a4f55, #2a2e33 45%, #1a1d21 75%, #3b3f44); }
.t-iw { width: 58px; }
.t-outlook { width: 53px; margin-left: 4px; }
.t-ie { width: 53px; margin-left: 9px; border-color: #e9c77a; background: linear-gradient(#e8c95e, #d98a1e 60%, #c9701a); }
.t-chrome { width: 58px; margin-left: 9px; }
.t-word { width: 58px; margin-left: 4px; background: linear-gradient(135deg, #8c9096, #5c6066 45%, #44474c 75%, #6b6f74); }
.stack { box-shadow: 4px 0 0 -1px #2c3036; }
.iw-tile { width: 32px; height: 32px; display: flex; align-items: center; justify-content: center; background: #b4b4b4; overflow: hidden; }
.iw-text { display: block; color: #000080; font: 700 27px/32px "Liberation Sans", Arial, sans-serif; letter-spacing: -.5px; transform: scaleY(1.25); }
.ie-e { font: 700 38px/34px "Liberation Sans", Arial, sans-serif; color: #2fa6e8; margin-top: -8px; }
.ie-ring { position: absolute; left: 9px; top: 2px; }
.w-letter { font: 700 10px "Liberation Sans", Arial, sans-serif; fill: #fff; }
.q-mark { font: 700 12px "Liberation Sans", Arial, sans-serif; fill: #fff; }
.tb-space { flex: 1; }
.tray-en { width: 30px; flex: none; padding-right: 1px; text-align: right; font-size: 12px; color: #e4e4e4; }
.tray { width: 330px; flex: none; margin-right: 2px; display: grid; grid-template-columns: repeat(14, 1fr); align-items: center; justify-items: center; }
.tray svg { display: block; }
.clock { width: 72px; flex: none; display: flex; flex-direction: column; align-items: center; font-size: 12px; line-height: 16px; color: #f0f0f0; white-space: nowrap; }
.show-desk { width: 14px; height: 38px; flex: none; margin-left: 1px; border: 1px solid #666; border-right: 0; background: linear-gradient(#34383d, #1a1d20); }
```
